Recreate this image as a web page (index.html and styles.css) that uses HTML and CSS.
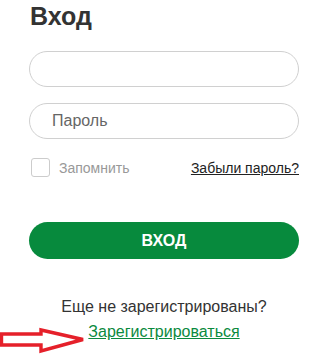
FILE: index.html
```html
<!DOCTYPE html>
<html>
<head>
  <title>Вход</title>
  <link rel="stylesheet" href="styles.css">
</head>
<body>
  <div class="container">
    <h2>Вход</h2>

    <div class="form-group">
      <input type="text" id="login">
    </div>

    <div class="form-group">
      <input type="password" id="password" placeholder="Пароль">
    </div>

    <div class="options">
      <label class="remember"><span class="check"></span>Запомнить</label>
      <a href="#" class="forgot">Забыли пароль?</a>
    </div>

    <button class="btn">ВХОД</button>

    <div class="register">
      <p>Еще не зарегистрированы?</p>
      <div class="register-link">
        <svg class="arrow" width="88" height="32" viewBox="0 0 88 32">
          <path d="M1.5 11 L41 11 L41 7 L83 16.5 L41 28 L41 22 L1.5 22 Z" fill="none" stroke="#e5202a" stroke-width="3.4" stroke-linejoin="miter"/>
        </svg>
        <a href="#">Зарегистрироваться</a>
      </div>
    </div>
  </div>
</body>
</html>
```

FILE: styles.css
```css
html, body {
  min-height: 100%;
}

body {
  margin: 0;
  background-color: #FFF;
  font-family: Arial, "Liberation Sans", sans-serif;
}

.container {
  width: 270px;
  padding: 0 30px 24px 29px;
}

h2 {
  margin: 0;
  padding: 1px 0 0 1px;
  font-size: 25px;
  line-height: 30px;
  color: #333;
}

.form-group {
  margin-top: 20px;
}

.form-group + .form-group {
  margin-top: 16px;
}

.form-group input {
  box-sizing: border-box;
  width: 100%;
  height: 36px;
  padding: 0 22px;
  border: 1px solid #D0D0D0;
  border-radius: 18px;
  font-family: inherit;
  font-size: 16px;
  color: #333;
  outline: none;
}

.form-group input::placeholder {
  color: #666;
}

.options {
  display: flex;
  justify-content: space-between;
  align-items: center;
  margin-top: 19px;
  font-size: 14px;
}

.remember {
  display: flex;
  align-items: center;
  color: #999;
}

.check {
  box-sizing: border-box;
  width: 19px;
  height: 19px;
  margin: 0 9px 0 2px;
  border: 1px solid #CCC;
  border-radius: 3px;
}

.forgot {
  color: #222;
}

.btn {
  display: block;
  width: 100%;
  height: 37px;
  margin-top: 45px;
  border: none;
  border-radius: 19px;
  background-color: #078A3D;
  color: #FFF;
  font-family: inherit;
  font-size: 16px;
  font-weight: bold;
  cursor: pointer;
}

.register {
  margin-top: 38px;
  text-align: center;
  font-size: 16px;
  color: #333;
}

.register p {
  margin: 0;
  line-height: 20px;
}

.register-link {
  position: relative;
  margin-top: 5px;
  line-height: 20px;
}

.register-link a {
  color: #0B8A3E;
}

.arrow {
  position: absolute;
  left: -29px;
  top: 1px;
}
```
